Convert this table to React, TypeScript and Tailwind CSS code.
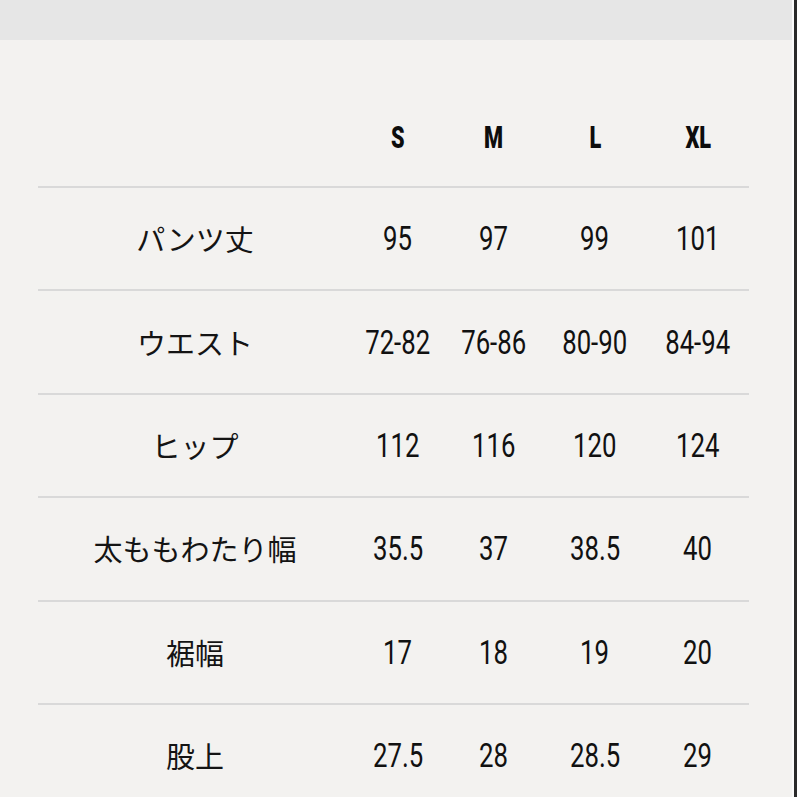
import React from 'react';

const sizes = ['S', 'M', 'L', 'XL'];

const rows = [
  { label: 'パンツ丈', values: ['95', '97', '99', '101'] },
  { label: 'ウエスト', values: ['72-82', '76-86', '80-90', '84-94'] },
  { label: 'ヒップ', values: ['112', '116', '120', '124'] },
  { label: '太ももわたり幅', values: ['35.5', '37', '38.5', '40'] },
  { label: '裾幅', values: ['17', '18', '19', '20'] },
  { label: '股上', values: ['27.5', '28', '28.5', '29'] },
];

const gridCols = 'grid grid-cols-[314px_92px_100px_102px_104px]';

function Num({ children }: { children: React.ReactNode }) {
  return (
    <span className="inline-block scale-x-[0.78] text-[33px] leading-none text-[#111] font-['Roboto',sans-serif] font-normal">
      {children}
    </span>
  );
}

function Head({ children }: { children: React.ReactNode }) {
  return (
    <span className="inline-block scale-x-[0.7] text-[31px] leading-none text-[#0d0d0d] font-['Roboto',sans-serif] font-black">
      {children}
    </span>
  );
}

export default function App() {
  return (
    <div className="flex w-[797px] h-[797px] overflow-hidden bg-[#f3f2f0]">
      <div className="flex-1 flex flex-col">
        <div className="h-[40px] bg-[#e6e6e6] shrink-0" />
        <div className="h-[48px] shrink-0" />
        <div className="pl-[38px]">
          <div className={`${gridCols} h-[98px] items-center`}>
            <div />
            {sizes.map(s => (
              <div key={s} className="flex justify-center">
                <Head>{s}</Head>
              </div>
            ))}
          </div>
          {rows.map(r => (
            <div key={r.label}>
              <div className="h-[2px] w-[711px] bg-[#d9d9d9]" />
              <div className={`${gridCols} h-[101.4px] items-center`}>
                <div className="flex justify-center text-[29px] leading-none text-[#141414] font-['Noto_Sans_CJK_JP','Noto_Sans',sans-serif] font-normal">
                  {r.label}
                </div>
                {r.values.map((v, i) => (
                  <div key={i} className="flex justify-center">
                    <Num>{v}</Num>
                  </div>
                ))}
              </div>
            </div>
          ))}
        </div>
      </div>
      <div className="w-[2px] bg-[#fafafa]" />
      <div className="w-[3px] bg-[#2a2a2a]" />
    </div>
  );
}
